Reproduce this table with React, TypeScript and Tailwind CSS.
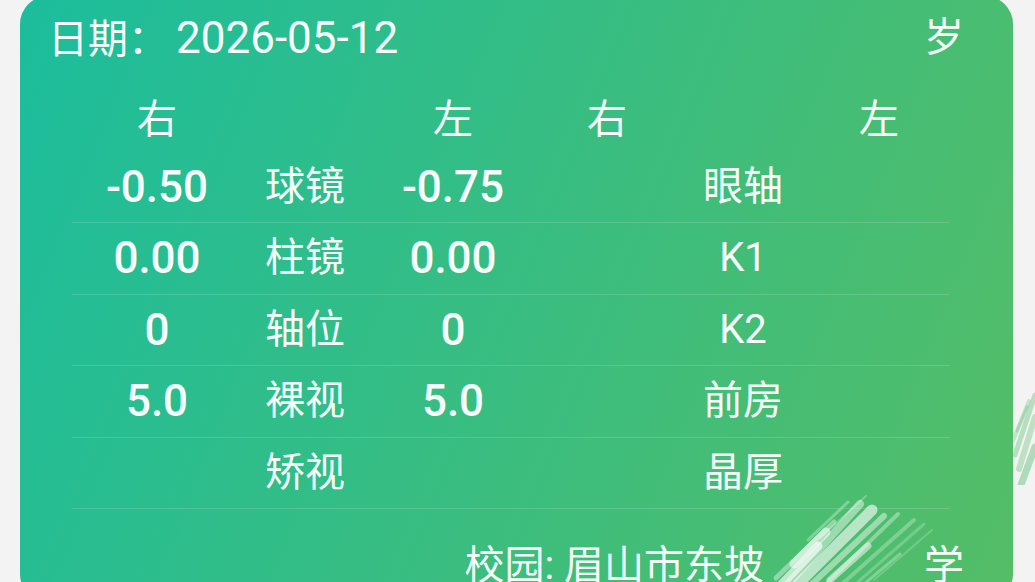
import React from "react";

type Row = {
  right: string;
  label: string;
  left: string;
  label2: string;
};

const rows: Row[] = [
  { right: "-0.50", label: "球镜", left: "-0.75", label2: "眼轴" },
  { right: "0.00", label: "柱镜", left: "0.00", label2: "K1" },
  { right: "0", label: "轴位", left: "0", label2: "K2" },
  { right: "5.0", label: "裸视", left: "5.0", label2: "前房" },
  { right: "", label: "矫视", left: "", label2: "晶厚" },
];

function Smear() {
  // white brush smear over the hidden part of the school name
  const strokes = [
    { d: "M20 104 L92 24", w: 8, o: 0.45 },
    { d: "M30 104 L104 30", w: 11, o: 0.6 },
    { d: "M44 104 L116 36", w: 6, o: 0.45 },
    { d: "M8 98 L66 42", w: 5, o: 0.4 },
    { d: "M14 104 L50 66", w: 9, o: 0.65 },
    { d: "M58 104 L130 34", w: 4, o: 0.35 },
    { d: "M74 104 L146 40", w: 4, o: 0.28 },
    { d: "M90 102 L156 44", w: 3, o: 0.22 },
    { d: "M106 100 L164 50", w: 2, o: 0.2 },
    { d: "M26 84 L58 52", w: 9, o: 0.55 },
    { d: "M62 100 L100 66", w: 7, o: 0.5 },
    { d: "M96 104 L132 74", w: 3, o: 0.3 },
    { d: "M40 60 L80 22", w: 3, o: 0.3 },
    { d: "M52 58 L98 16", w: 2, o: 0.25 },
  ];
  return (
    <svg
      className="pointer-events-none absolute left-[768px] top-[480px]"
      width="172"
      height="104"
      viewBox="0 0 172 104"
    >
      {strokes.map((s, i) => (
        <path
          key={i}
          d={s.d}
          stroke="#ffffff"
          strokeOpacity={s.o}
          strokeWidth={s.w}
          strokeLinecap="round"
          fill="none"
        />
      ))}
    </svg>
  );
}

function EdgeSmear() {
  const strokes = [
    { d: "M2 70 L22 10", w: 5, o: 0.4 },
    { d: "M6 84 L22 32", w: 6, o: 0.35 },
    { d: "M0 56 L16 16", w: 4, o: 0.3 },
    { d: "M8 100 L22 62", w: 7, o: 0.45 },
    { d: "M4 46 L14 22", w: 3, o: 0.3 },
  ];
  return (
    <svg
      className="pointer-events-none absolute left-[1013px] top-[385px]"
      width="22"
      height="100"
      viewBox="0 0 22 100"
    >
      {strokes.map((s, i) => (
        <path
          key={i}
          d={s.d}
          stroke="#5cbf74"
          strokeOpacity={s.o}
          strokeWidth={s.w}
          strokeLinecap="round"
          fill="none"
        />
      ))}
    </svg>
  );
}

export default function App() {
  return (
    <div className="relative h-[582px] w-[1035px] overflow-hidden bg-[#f3f3f3] font-['Roboto','Noto_Sans_CJK_SC',sans-serif] text-[#f6fff9]">
      <div className="-mt-[4px] ml-[20px] h-[606px] w-[993px] rounded-[28px] bg-linear-[112deg] from-[#1cbd9d] to-[#55bd66]">
        <div className="flex h-[84px] items-center justify-between pl-[28px] pr-[49px] text-[40px]">
          <span>
            日期：<span className="ml-[8px] text-[44px]">2026-05-12</span>
          </span>
          <span>岁</span>
        </div>

        <div className="ml-[52px] w-[878px]">
          <div className="flex h-[71.5px] items-start pt-[20px] text-[40px] leading-10">
            <div className="w-[170px] text-center">右</div>
            <div className="w-[126px]" />
            <div className="w-[170px] text-center">左</div>
            <div className="w-[138px] text-center">右</div>
            <div className="w-[134px]" />
            <div className="w-[138px] text-center">左</div>
          </div>

          {rows.map((r) => (
            <div
              key={r.label}
              className="flex h-[71.5px] items-center border-b border-white/15"
            >
              <div className="w-[170px] text-center text-[44px] font-medium">
                {r.right}
              </div>
              <div className="w-[126px] text-center text-[40px]">{r.label}</div>
              <div className="w-[170px] text-center text-[44px] font-medium">
                {r.left}
              </div>
              <div className="w-[138px]" />
              <div className="w-[134px] text-center text-[40px]">{r.label2}</div>
              <div className="w-[138px]" />
            </div>
          ))}
        </div>

        <div className="flex justify-end pr-[49px] pt-[37px] text-[40px] leading-10">
          <span>校园: 眉山市东坡</span>
          <span className="w-[160px]" />
          <span>学</span>
        </div>
      </div>
      <Smear />
      <EdgeSmear />
    </div>
  );
}
